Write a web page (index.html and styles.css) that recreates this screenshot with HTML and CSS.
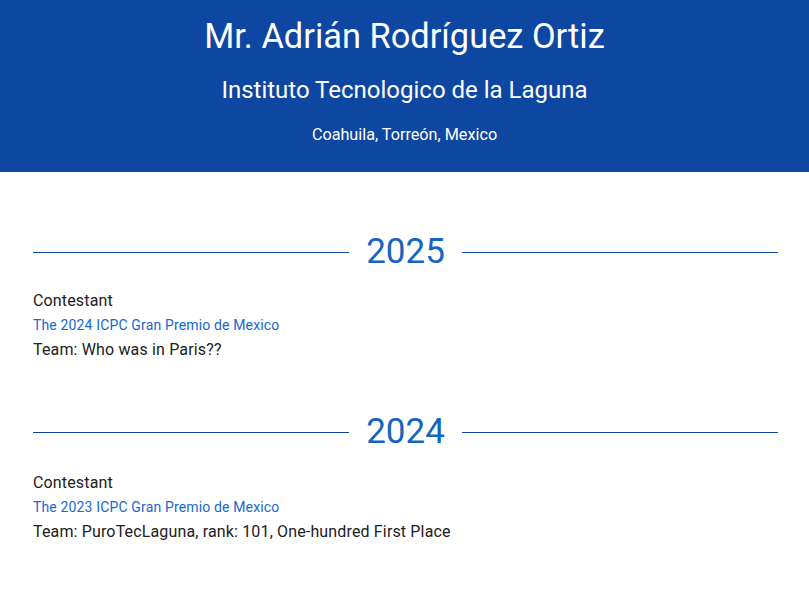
FILE: index.html
```html
<!DOCTYPE html>
<html lang="es">
<head>
<meta charset="utf-8">
<title>Mr. Adrián Rodríguez Ortiz</title>
<link rel="stylesheet" href="styles.css">
</head>
<body>
<header class="hero">
  <h1 class="hero-name">Mr. Adrián Rodríguez Ortiz</h1>
  <h2 class="hero-school">Instituto Tecnologico de la Laguna</h2>
  <p class="hero-place">Coahuila, Torreón, Mexico</p>
</header>
<main class="timeline">
  <section class="year-block">
    <div class="year-divider"><span class="year-line"></span><span class="year-label">2025</span><span class="year-line"></span></div>
    <div class="entry">
      <div class="entry-role">Contestant</div>
      <a class="entry-contest" href="#">The 2024 ICPC Gran Premio de Mexico</a>
      <div class="entry-team">Team: Who was in Paris??</div>
    </div>
  </section>
  <section class="year-block">
    <div class="year-divider"><span class="year-line"></span><span class="year-label">2024</span><span class="year-line"></span></div>
    <div class="entry">
      <div class="entry-role">Contestant</div>
      <a class="entry-contest" href="#">The 2023 ICPC Gran Premio de Mexico</a>
      <div class="entry-team">Team: PuroTecLaguna, rank: 101, One-hundred First Place</div>
    </div>
  </section>
</main>
</body>
</html>
```
FILE: styles.css
```css
* { box-sizing: border-box; }
html, body { margin: 0; padding: 0; background: #fff; }
body {
  font-family: Roboto, "Noto Sans", "Liberation Sans", sans-serif;
  color: #212121;
}
.hero {
  background: #0d47a1;
  color: #fff;
  text-align: center;
  height: 172px;
  padding-top: 14px;
}
.hero-name {
  margin: 0;
  font-size: 34.4px;
  font-weight: 400;
  line-height: 44px;
}
.hero-school {
  margin: 17px 0 0;
  font-size: 24px;
  font-weight: 400;
  line-height: 30px;
}
.hero-place {
  margin: 20px 0 0;
  font-size: 16.2px;
  line-height: 20px;
}
.timeline {
  padding: 58px 31px 0 33px;
  display: flex;
  flex-direction: column;
  gap: 47px;
}
.year-divider {
  display: flex;
  align-items: center;
  gap: 17px;
  height: 44px;
}
.year-line {
  flex: 1;
  height: 1px;
  background: #0d47a1;
}
.year-label {
  font-size: 35px;
  line-height: 44px;
  color: #1565c0;
  font-weight: 400;
}
.entry {
  margin-top: 15px;
  display: flex;
  flex-direction: column;
  letter-spacing: 0.15px;
}
.entry-role {
  font-size: 16px;
  line-height: 24px;
}
.entry-contest {
  font-size: 14px;
  line-height: 24px;
  color: #1967d2;
  text-decoration: none;
}
.entry-team {
  font-size: 16px;
  line-height: 26px;
}
.year-block + .year-block .entry {
  margin-top: 17px;
}
```
